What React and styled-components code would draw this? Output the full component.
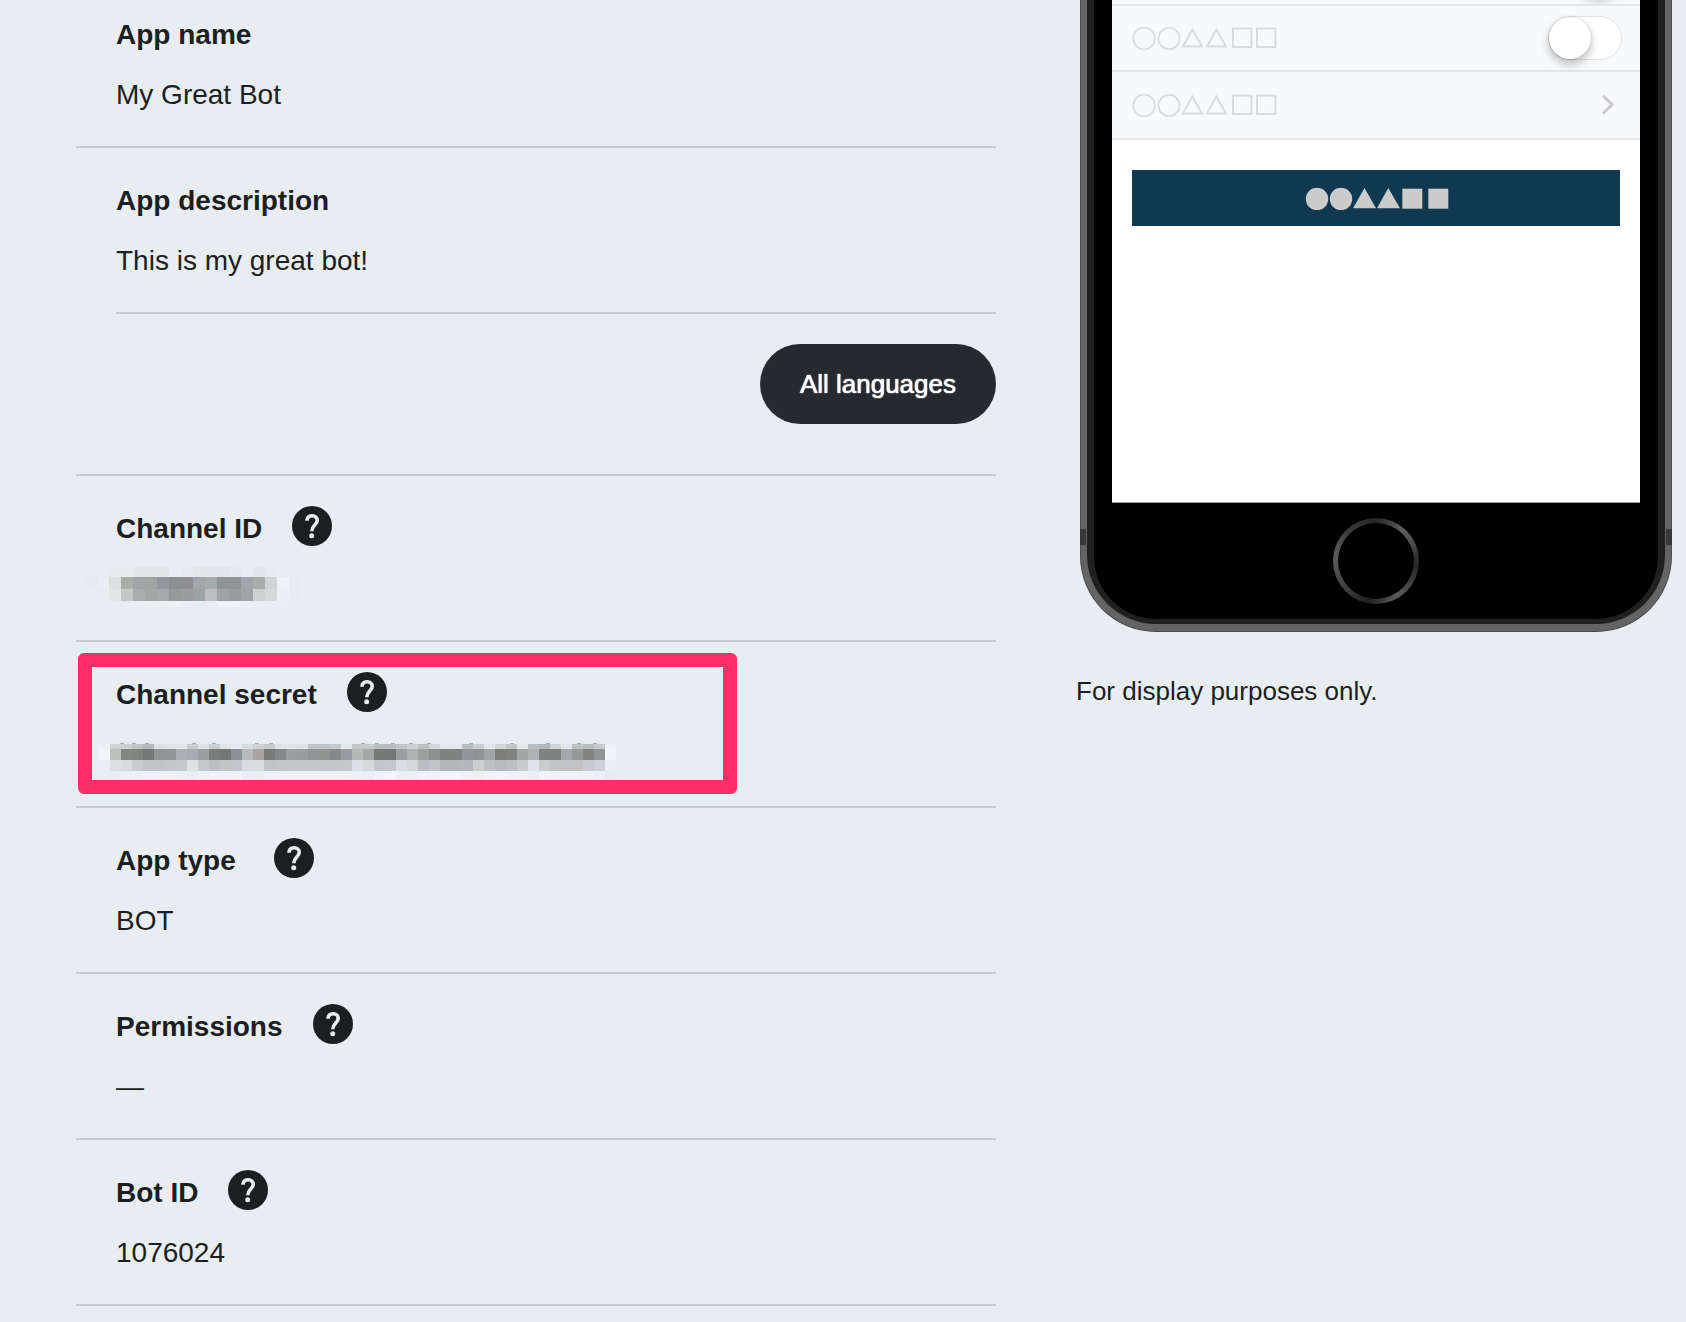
import React from 'react';
import styled, { createGlobalStyle } from 'styled-components';

const GlobalStyle = createGlobalStyle`
  * { box-sizing: border-box; }
  body {
    margin: 0;
    background: #e8edf1;
    color: #1b1e22;
    font-family: "Liberation Sans", Helvetica, Arial, sans-serif;
    font-size: 28px;
  }
`;

const Page = styled.main`
  display: grid;
  grid-template-columns: minmax(0, 920fr) minmax(0, 596fr);
  gap: 80px;
  align-items: start;
  min-height: 100vh;
  padding: 0 14px 0 76px;
`;

const Details = styled.dl`
  margin: 0;
`;

const Row = styled.div`
  position: relative;
  padding: ${({ $first }) => ($first ? 5 : 23)}px 0 21px 40px;
  border-bottom: 2px solid #c6cbd0;
  margin-left: ${({ $inset }) => ($inset ? 40 : 0)}px;
  ${({ $inset }) => $inset && 'padding-left: 0;'}
`;

const Term = styled.dt`
  display: flex;
  align-items: center;
  gap: 30px;
  height: 60px;
  font-weight: 700;
  white-space: pre;
`;

const Value = styled.dd`
  margin: 0;
  height: 60px;
  line-height: 60px;
`;

const Actions = styled.div`
  display: flex;
  justify-content: flex-end;
  padding: 30px 0 50px;
  border-bottom: 2px solid #c6cbd0;
`;

const PillButton = styled.button`
  height: 80px;
  padding: 0 40px;
  border: 0;
  border-radius: 40px;
  background: #26292e;
  color: #fff;
  font-family: inherit;
  font-size: 26px;
  text-shadow: 0 0 1px #fff, 0 0 1px #fff;
  cursor: pointer;
`;

const HelpButton = styled.button`
  width: 40px;
  height: 40px;
  margin: 0 0 6px;
  padding: 0;
  border: 0;
  border-radius: 50%;
  background: #1d1e22;
  cursor: pointer;

  svg { display: block; }
`;

const Highlight = styled.div`
  position: absolute;
  top: 11px;
  left: 2px;
  width: 659px;
  height: 141px;
  border-radius: 6px;
  pointer-events: none;

  &::before {
    content: "";
    position: absolute;
    inset: 0;
    border: 14px solid #ff2d6a;
    border-radius: 6px;
  }
`;

const Redaction = styled.svg`
  display: block;
  margin-left: -32px;
`;

const Preview = styled.aside`
  min-width: 0;
`;

const PhoneBody = styled.div`
  position: relative;
  margin-left: 4px;
  padding: 0 6px 7px;
  border: 1px solid #4b4b4b;
  border-width: 0 1px 1px;
  border-radius: 0 0 76px 76px;
  background: #646464;
`;

const PhoneRim = styled.div`
  padding: 0 7px 5px;
  border-radius: 0 0 69px 69px;
  background: #202020;
`;

const PhoneFace = styled.div`
  padding: 0 18px;
  border-radius: 0 0 62px 62px;
  background: #000;
`;

const SideNotch = styled.span`
  position: absolute;
  bottom: 86px;
  ${({ $side }) => $side}: -1px;
  width: 6px;
  height: 16px;
  background: #383838;
`;

const Screen = styled.div`
  height: 503px;
  border-bottom: 1px solid #9a9a9a;
  background: #fff;
`;

const ScrolledRow = styled.div`
  height: 6px;
  border-bottom: 2px solid #e5e6e8;
  background: radial-gradient(ellipse 20px 5px at calc(100% - 41px) 0, #d4d5d8, #f8f9fb);
`;

const SettingRow = styled.div`
  display: flex;
  align-items: center;
  justify-content: space-between;
  height: ${({ $tall }) => ($tall ? 68 : 66)}px;
  padding: 0 18px 0 20px;
  border-bottom: 2px solid #e5e6e8;
  background: #f8f9fb;
`;

const Toggle = styled.input`
  appearance: none;
  width: 74px;
  height: 44px;
  margin: 0;
  border: 1px solid #e2e3e5;
  border-radius: 22px;
  background: #fff;

  &::before {
    content: "";
    display: block;
    width: 42px;
    height: 42px;
    border-radius: 50%;
    background: #fff;
    box-shadow: 0 5px 10px rgba(0, 0, 0, 0.26), 0 0 3px rgba(0, 0, 0, 0.16);
  }

  &:checked::before { margin-left: 30px; }
`;

const Chevron = styled.svg`
  margin-right: 7px;
`;

const ScreenButton = styled.button`
  display: flex;
  align-items: center;
  justify-content: center;
  width: calc(100% - 40px);
  height: 56px;
  margin: 30px 20px 0;
  border: 0;
  background: #10384f;
`;

const HomeArea = styled.div`
  display: grid;
  place-items: center;
  height: 116px;
`;

const HomeButton = styled.span`
  width: 86px;
  height: 86px;
  padding: 5px;
  border-radius: 50%;
  background: conic-gradient(#242424, #5c5c5c 40deg, #505050 60deg, #262626 95deg, #5c5c5c 150deg, #202020 190deg, #3c3c3c 225deg, #5c5c5c 275deg, #3c3c3c 315deg, #242424);

  &::before {
    content: "";
    display: block;
    height: 100%;
    border-radius: 50%;
    background: #000;
  }
`;

const Caption = styled.p`
  margin: 40px 0 0;
  font-size: 26px;
  line-height: 38px;
`;

const channelIdTiles = {
  x: 1,
  size: 12,
  rows: [
    { y: 9, h: 10, from: 2, tiles: 'e7ebee e7ebee e5e8eb e4e8eb e4e8eb e9eef3 e6eaee e3e7ea e4e8ec e2e5e9 e5e9ed e8edf1 e2e5e9 e7ebef' },
    { y: 19, h: 12, from: 0, tiles: 'e6ebef e9eef7 dedfe0 aaaea9 a0a4a5 a2a4a3 91979a 8d8e90 8e8e90 a0a6a9 a5abac 8f9595 929395 a1a5a9 a8ada9 cdd4d6 edf2f7 e7ebef' },
    { y: 31, h: 12, from: 2, tiles: 'e4e7e8 c4c8c6 acacaf a3a6a5 a5a9ab 979998 9a9d9d 9da2a5 bdbdc0 9fa3a6 9a9b9d 9fa3a6 cdd2d1 d4d9dc ebf0f4 e7ebef' },
    { y: 43, h: 6, from: 3, tiles: 'eaeef2 eaeef2 e9eef1 e9eef1 edf2f7 eaeff3 e8edf2 e8edf1 edf3f8 edf3f8 eaeff4 eaeef3' },
  ],
};

const secretTiles = {
  x: 15,
  size: 11,
  rows: [
    { y: 20, h: 5, from: 0, tiles: 'ecf1f5 d0d5d4 cbd0d0 bfc5c6 b5bcbe dde1e3 dfe4e6 e2e7e9 c7cccf dee4e5 c8cecf e0e5e8 e5eaee d6dbde cdd1d3 c8cccd dee3e5 dfe4e7 dde2e4 bfc4c6 bfc4c6 c4c9cc e2e7ea c3c8c9 c6cccb b9bebf b9bec0 c3c7c9 cdd0d2 bbc0c1 d3d8db e3e8ec e2e7ea b8bdbe c9cdd0 e2e7e9 d3d7d9 c3c8c9 e4e9ec b7bdc0 afb8bc cfd4d7 e2e7ea bec3c2 b9bebe c6cacd eef3fb e7ecf0' },
    { y: 25, h: 11, from: 0, tiles: 'f0f4fb bcc0bb 81877f 7f847e 747977 909695 909696 aab0b4 aaabb0 9b9da1 7c7c7b 747978 8a9094 b9babd aaa5a1 7a7b79 84878c 9b9d9f 989c9e 8f9592 8f9490 87878c 9a9ca5 b5bab9 a3a8a6 787976 747978 9a9fa0 b1b0b0 9ca09f 8b8f8d 7e827f 7f837f 94949a 8f9395 a1a5a4 7d7d79 7f827f a1a6a5 adb2b2 7f8182 7e827f a5a7ac 959998 848480 909598 f0f5fd e7ecf0' },
    { y: 36, h: 11, from: 0, tiles: 'e9eef3 dbe0e2 d6dbdd c9cdcf c0c4c6 c1c5c7 c3c7c9 c5c9cb dfe1e5 c5c9cb bcc0c2 c1c5c6 c1c7ca d5dbdf dadbdd c0c4c6 c2c6c8 c3c7c9 c3c7c9 c3c7c9 c3c7c9 c3c7c9 c4c8cb dae0e4 d4d9dc c3c6ca c4c7cb d8dee2 d5d7d9 b9bec5 c1c6c9 b2b7b9 b2b7b9 b3babd cad0cf bcc1c4 b6bbbe bbbfc1 c6cbcc dde3e8 c8cccd c2c5c8 c2c3c7 c2c2c5 c8ccd0 cdd2da eaeff5 e7ecf0' },
    { y: 47, h: 9, from: 0, tiles: 'e8edf1 e9edf1 ebf0f4 ecf1f6 edf2f8 edf2f8 edf2f7 ebf0f4 e9eef6 edf2f7 eef3f8 eef4f9 eef3f8 e9eef5 ebeff3 edf2f7 edf2f8 edf2f8 edf2f8 edf2f8 eef3f8 eef3f8 ecf1f6 ebf0f4 eaeff6 f0f4fa f0f5fa ebf0f4 ebeff5 edf2fb eff4fa f1f6fb f1f6fb edf2f7 ebf0f4 eef3f8 f0f5fa eef3f9 edf2f6 e9eef2 eff4f9 edf2fb edf2fb eef2fb eef3f9 ebf0f6 e7ebef' },
  ],
  flecks: [38, 50, 63, 110, 130, 173, 187, 279, 293, 309, 327, 345, 387, 428, 464, 495, 511],
};

function Redacted({ pattern, label, width }) {
  return (
    <Redaction
      width={width}
      height="60"
      viewBox={`0 1 ${width} 60`}
      role="img"
      aria-label={label}
      shapeRendering="crispEdges"
    >
      {pattern.flecks?.map((x) => (
        <rect key={x} x={x - 2} y="19" width="4" height="1" fill="#a9acad" />
      ))}
      {pattern.rows.map((row) =>
        row.tiles.split(' ').map((tile, i) => (
          <rect
            key={`${row.y}-${i}`}
            x={pattern.x + (row.from + i) * pattern.size}
            y={row.y}
            width={pattern.size}
            height={row.h}
            fill={`#${tile}`}
          />
        ))
      )}
    </Redaction>
  );
}

function Help({ topic }) {
  return (
    <HelpButton type="button" aria-label={`Help: ${topic}`}>
      <svg width="40" height="40" viewBox="0 0 40 40" fill="none">
        <path
          d="M15 14.8C15.1 11.6 17 9.8 20.1 9.8C23.2 9.8 25.2 11.6 25.2 14.4C25.2 18.8 19.8 19.6 19.8 25.2"
          stroke="#e8edf1"
          strokeWidth="3.6"
        />
        <circle cx="19.7" cy="29.7" r="2.5" fill="#e8edf1" />
      </svg>
    </HelpButton>
  );
}

function Field({ label, help, first, inset, highlighted, children }) {
  return (
    <Row $first={first} $inset={inset}>
      <Term>
        {label}
        {help && <Help topic={label.trim()} />}
      </Term>
      <Value>{children}</Value>
      {highlighted && <Highlight />}
    </Row>
  );
}

function OutlineShapes() {
  return (
    <svg width="146" height="26" viewBox="0 0 146 26" fill="none" stroke="#dadbdd" strokeWidth="2">
      <circle cx="12" cy="13.5" r="10.8" strokeWidth="1.8" />
      <circle cx="37" cy="13.5" r="10.6" strokeWidth="1.8" />
      <path d="M60.3 4.6L70 21.6H50.8Z" />
      <path d="M84.3 4.6L94 21.6H74.8Z" />
      <rect x="101" y="3.6" width="18.4" height="18.4" />
      <rect x="125" y="3.6" width="18.4" height="18.4" />
    </svg>
  );
}

function SolidShapes() {
  return (
    <svg width="146" height="24" viewBox="0 0 146 24" fill="#cbcbcb">
      <circle cx="14" cy="13" r="11.2" />
      <circle cx="38" cy="13" r="11.2" />
      <path d="M61.5 2L73 22.2H50Z" />
      <path d="M85.3 2L97 22.2H74Z" />
      <rect x="99.3" y="2.7" width="20" height="20" />
      <rect x="125.3" y="2.7" width="20" height="20" />
    </svg>
  );
}

function Phone() {
  return (
    <PhoneBody>
      <SideNotch $side="left" />
      <SideNotch $side="right" />
      <PhoneRim>
        <PhoneFace>
          <Screen>
            <ScrolledRow />
            <SettingRow>
              <OutlineShapes />
              <Toggle type="checkbox" aria-label="Sample setting" />
            </SettingRow>
            <SettingRow $tall>
              <OutlineShapes />
              <Chevron width="14" height="22" viewBox="0 0 14 22" fill="none" stroke="#cacacf" strokeWidth="3">
                <path d="M2 1.5L11 10.5L2 19.5" />
              </Chevron>
            </SettingRow>
            <ScreenButton type="button" aria-label="Sample action">
              <SolidShapes />
            </ScreenButton>
          </Screen>
          <HomeArea>
            <HomeButton />
          </HomeArea>
        </PhoneFace>
      </PhoneRim>
    </PhoneBody>
  );
}

export default function App() {
  return (
    <>
      <GlobalStyle />
      <Page>
        <div>
          <Details>
            <Field label="App name" first>My Great Bot</Field>
            <Field label="App description" inset>This is my great bot!</Field>
          </Details>
          <Actions>
            <PillButton type="button">All languages</PillButton>
          </Actions>
          <Details>
            <Field label="Channel ID" help>
              <Redacted pattern={channelIdTiles} label="Hidden channel ID" width="220" />
            </Field>
            <Field label="Channel secret" help highlighted>
              <Redacted pattern={secretTiles} label="Hidden channel secret" width="546" />
            </Field>
            <Field label={'App type\u00a0'} help>BOT</Field>
            <Field label="Permissions" help>—</Field>
            <Field label="Bot ID" help>1076024</Field>
          </Details>
        </div>
        <Preview>
          <Phone />
          <Caption>For display purposes only.</Caption>
        </Preview>
      </Page>
    </>
  );
}
